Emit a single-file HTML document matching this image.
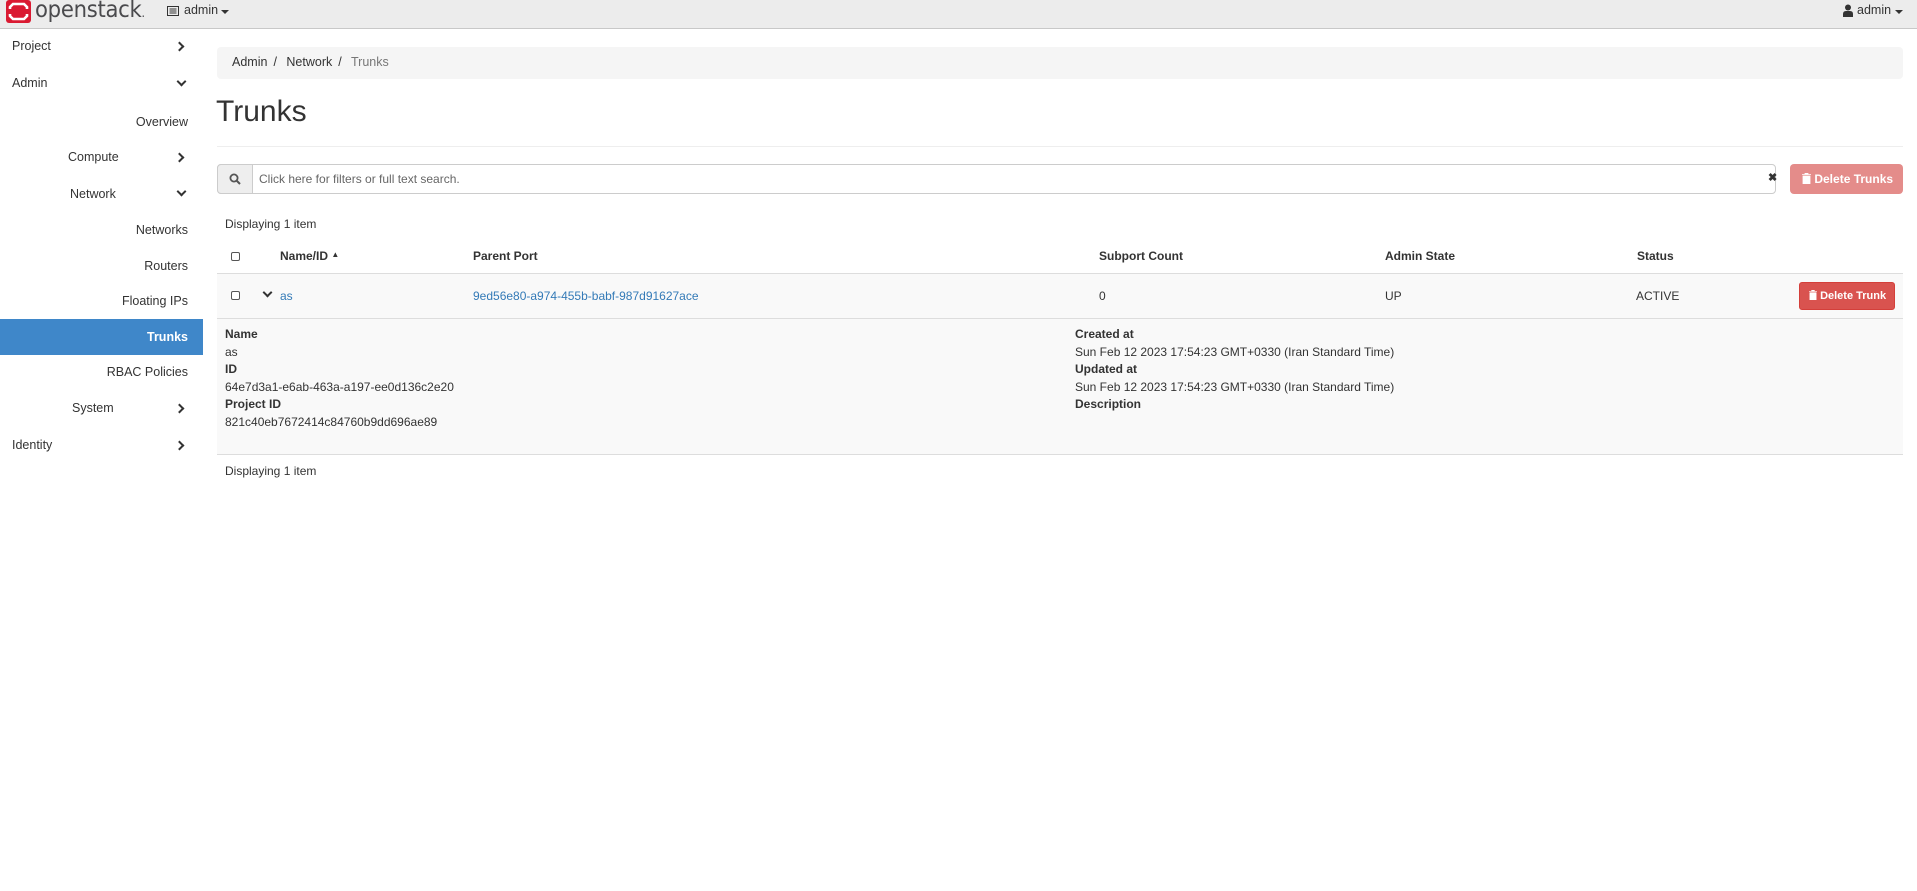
<!DOCTYPE html>
<html><head><meta charset="utf-8">
<style>
*{box-sizing:border-box;margin:0;padding:0}
body{width:1917px;height:891px;background:#fff;font-family:"Liberation Sans",Arial,sans-serif;font-size:12px;color:#333;position:relative;overflow:hidden}
.a{position:absolute;white-space:nowrap}
.nav{position:absolute;left:0;top:0;width:1917px;height:29px;background:#ececec;border-bottom:1px solid #c8c8c8}
.chev{position:absolute;width:7px;height:7px;border-right:2.5px solid #333;border-bottom:2.5px solid #333}
.r{transform:rotate(-45deg)}
.d{transform:rotate(45deg)}
.b{font-weight:bold}
.link{color:#337ab7}
.cb{position:absolute;width:9px;height:9px;border:1px solid #555;border-radius:2px;background:#fff}
.s{font-size:12.5px}
</style></head><body>
<div class="nav"></div>
<svg class="a" style="left:6px;top:0" width="25" height="23" viewBox="0 0 25 23">
<rect x="0" y="0" width="25" height="23" rx="3" fill="#da1a32"/>
<path d="M4 9 V7 L7 4 H18 L21 7 V9 M21 14 V16 L18 19 H7 L4 16 V14" fill="none" stroke="#fff" stroke-width="2.6"/>
</svg>
<div class="a" style="left:35px;top:-3px;font-size:23px;color:#4a4a4d;letter-spacing:-0.3px;font-family:'DejaVu Sans',sans-serif;transform:scaleX(0.92);transform-origin:left">openstack<span style="font-size:12px">.</span></div>
<svg class="a" style="left:167px;top:6px" width="12" height="10" viewBox="0 0 12 10"><rect x="0.5" y="0.5" width="11" height="9" fill="none" stroke="#333"/><path d="M2.5 3H9.5M2.5 5H9.5M2.5 7H9.5" stroke="#333"/></svg>
<div class="a s" style="left:184px;top:3px">admin</div>
<div class="a" style="left:221px;top:10px;border-left:4px solid transparent;border-right:4px solid transparent;border-top:4px solid #333"></div>
<svg class="a" style="left:1843px;top:4px" width="10" height="13" viewBox="0 0 10 13"><circle cx="5" cy="3.5" r="3" fill="#333"/><path d="M0 13 V10 Q0 7 3 7 H7 Q10 7 10 10 V13Z" fill="#333"/></svg>
<div class="a s" style="left:1857px;top:3px">admin</div>
<div class="a" style="left:1895px;top:10px;border-left:4px solid transparent;border-right:4px solid transparent;border-top:4px solid #333"></div>

<div class="a" style="left:0;top:319px;width:203px;height:36px;background:#3f87c9"></div>
<div class="a s" style="left:12px;top:39px">Project</div><div class="chev r" style="left:176px;top:43px"></div>
<div class="a s" style="left:12px;top:76px">Admin</div><div class="chev d" style="left:178px;top:78px"></div>
<div class="a s" style="right:1729px;top:115px">Overview</div>
<div class="a s" style="left:68px;top:150px">Compute</div><div class="chev r" style="left:176px;top:154px"></div>
<div class="a s" style="left:70px;top:187px">Network</div><div class="chev d" style="left:178px;top:188px"></div>
<div class="a s" style="right:1729px;top:223px">Networks</div>
<div class="a s" style="right:1729px;top:259px">Routers</div>
<div class="a s" style="right:1729px;top:294px">Floating IPs</div>
<div class="a s b" style="right:1729px;top:330px;color:#fff">Trunks</div>
<div class="a s" style="right:1729px;top:365px">RBAC Policies</div>
<div class="a s" style="left:72px;top:401px">System</div><div class="chev r" style="left:176px;top:405px"></div>
<div class="a s" style="left:12px;top:438px">Identity</div><div class="chev r" style="left:176px;top:442px"></div>

<div class="a" style="left:217px;top:47px;width:1686px;height:32px;background:#f5f5f5;border-radius:4px"></div>
<div class="a s" style="left:232px;top:55px">Admin<span style="padding:0 6px">/</span> Network<span style="padding:0 6px">/</span> <span style="color:#777">Trunks</span></div>
<div class="a" style="left:216px;top:95px;font-size:30px;color:#333">Trunks</div>
<div class="a" style="left:217px;top:146px;width:1686px;height:1px;background:#eee"></div>

<div class="a" style="left:217px;top:164px;width:1559px;height:30px;border:1px solid #ccc;border-radius:4px"></div>
<div class="a" style="left:217px;top:164px;width:36px;height:30px;background:#eee;border:1px solid #ccc;border-radius:4px 0 0 4px"></div>
<svg class="a" style="left:229px;top:173px" width="12" height="12" viewBox="0 0 12 12"><circle cx="5" cy="5" r="3.6" fill="none" stroke="#555" stroke-width="1.8"/><path d="M7.5 7.5L11 11" stroke="#555" stroke-width="2"/></svg>
<div class="a" style="left:259px;top:172px;color:#666">Click here for filters or full text search.</div>
<div class="a b" style="left:1768px;top:171px;font-size:11px;color:#333">✖</div>
<div class="a" style="left:1790px;top:164px;width:113px;height:30px;background:#e48c8a;border-radius:4px;color:#fff;padding:8px 0 0 12px;font-size:12px"><svg width="9" height="11" viewBox="0 0 9 11" style="vertical-align:-1px"><path d="M0 1.5H9M3 1.5V0H6V1.5M1 3H8V11H1Z" fill="#fff" stroke="#fff" stroke-width="0.8"/></svg> <b>Delete Trunks</b></div>

<div class="a" style="left:225px;top:217px">Displaying 1 item</div>
<div class="cb" style="left:231px;top:252px"></div>
<div class="a b" style="left:280px;top:249px">Name/ID <span style="font-size:8px;position:relative;top:-3px">▲</span></div>
<div class="a b" style="left:473px;top:249px">Parent Port</div>
<div class="a b" style="left:1099px;top:249px">Subport Count</div>
<div class="a b" style="left:1385px;top:249px">Admin State</div>
<div class="a b" style="left:1637px;top:249px">Status</div>
<div class="a" style="left:217px;top:273px;width:1686px;height:182px;background:#f9f9f9;border-top:1px solid #ddd;border-bottom:1px solid #ddd"></div>
<div class="a" style="left:217px;top:318px;width:1686px;height:1px;background:#ddd"></div>
<div class="cb" style="left:231px;top:291px"></div>
<div class="chev d" style="left:264px;top:289px"></div>
<div class="a link" style="left:280px;top:289px">as</div>
<div class="a link" style="left:473px;top:289px">9ed56e80-a974-455b-babf-987d91627ace</div>
<div class="a" style="left:1099px;top:289px">0</div>
<div class="a" style="left:1385px;top:289px">UP</div>
<div class="a" style="left:1636px;top:289px">ACTIVE</div>
<div class="a" style="left:1799px;top:282px;width:96px;height:28px;background:#d9534f;border:1px solid #d43f3a;border-radius:3px;color:#fff;padding:7px 0 0 9px;font-size:11px"><svg width="8" height="10" viewBox="0 0 9 11" style="vertical-align:-1px"><path d="M0 1.5H9M3 1.5V0H6V1.5M1 3H8V11H1Z" fill="#fff" stroke="#fff" stroke-width="0.8"/></svg> <b>Delete Trunk</b></div>

<div class="a" style="left:225px;top:326px;line-height:17.6px">
<b>Name</b><br>as<br><b>ID</b><br>64e7d3a1-e6ab-463a-a197-ee0d136c2e20<br><b>Project ID</b><br>821c40eb7672414c84760b9dd696ae89</div>
<div class="a" style="left:1075px;top:326px;line-height:17.6px">
<b>Created at</b><br>Sun Feb 12 2023 17:54:23 GMT+0330 (Iran Standard Time)<br><b>Updated at</b><br>Sun Feb 12 2023 17:54:23 GMT+0330 (Iran Standard Time)<br><b>Description</b></div>
<div class="a" style="left:225px;top:464px">Displaying 1 item</div>
</body></html>
